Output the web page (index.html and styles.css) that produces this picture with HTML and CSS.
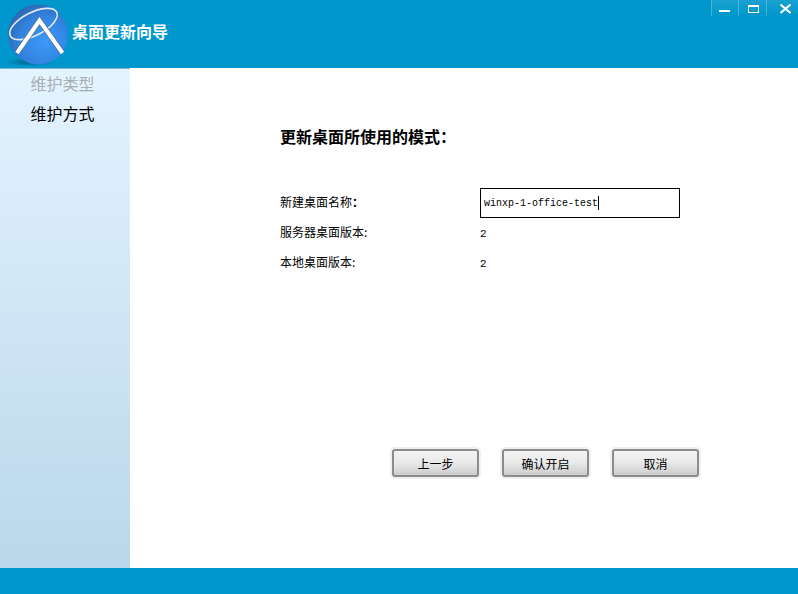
FILE: index.html
```html
<!DOCTYPE html>
<html lang="zh-CN">
<head>
<meta charset="utf-8">
<title>桌面更新向导</title>
<link rel="stylesheet" href="styles.css">
</head>
<body>
<div class="app">
  <header class="topbar">
    <svg class="logo" width="72" height="68" viewBox="0 0 72 68">
      <defs>
        <radialGradient id="ball" cx="0.62" cy="0.62" r="0.66">
          <stop offset="0" stop-color="#3c9af8"/>
          <stop offset="0.65" stop-color="#3282de"/>
          <stop offset="1" stop-color="#2c69b4"/>
        </radialGradient>
        <radialGradient id="shade" cx="0.5" cy="0.5" r="0.5">
          <stop offset="0" stop-color="#00506f" stop-opacity="0.75"/>
          <stop offset="1" stop-color="#00506f" stop-opacity="0"/>
        </radialGradient>
      </defs>
      <ellipse cx="30" cy="62" rx="24" ry="4.5" fill="url(#shade)"/>
      <circle cx="38" cy="34.5" r="30" fill="url(#ball)"/>
      <ellipse cx="33.5" cy="24" rx="26" ry="11.5" transform="rotate(-27 33.5 24)" fill="none" stroke="#dfe8f0" stroke-width="1.6"/>
      <path d="M17 53 L39.5 20.5 L62.5 53" fill="none" stroke="#5b6f84" stroke-width="5.4"/>
      <path d="M17 53 L39.5 20.5 L62.5 53" fill="none" stroke="#fff" stroke-width="4"/>
    </svg>
    <h1 class="app-title">桌面更新向导</h1>
    <div class="win-controls">
      <button class="win-btn" aria-label="最小化"><svg width="26" height="16" viewBox="0 0 26 16"><rect x="7" y="10" width="11" height="2" fill="#fff"/></svg></button>
      <button class="win-btn" aria-label="最大化"><svg width="27" height="16" viewBox="0 0 27 16"><rect x="9.5" y="5.5" width="10" height="7" fill="none" stroke="#fff" stroke-width="1"/><rect x="9" y="5" width="11" height="2" fill="#fff"/></svg></button>
      <button class="win-btn" aria-label="关闭"><svg width="31" height="16" viewBox="0 0 31 16"><path d="M13.5 4.5 L23.5 13 M23.5 4.5 L13.5 13" stroke="#fff" stroke-width="2.2" fill="none"/></svg></button>
    </div>
  </header>
  <div class="middle">
    <nav class="sidebar">
      <div class="step step-done">维护类型</div>
      <div class="step">维护方式</div>
    </nav>
    <main class="content">
      <h2 class="heading">更新桌面所使用的模式：</h2>
      <div class="form">
        <div class="label">新建桌面名称<b class="colon">：</b></div>
        <div class="field"><span class="field-text">winxp-1-office-test</span><span class="caret"></span></div>
        <div class="label">服务器桌面版本:</div>
        <div class="value">2</div>
        <div class="label">本地桌面版本:</div>
        <div class="value">2</div>
      </div>
      <div class="actions">
        <button class="btn">上一步</button>
        <button class="btn">确认开启</button>
        <button class="btn">取消</button>
      </div>
    </main>
  </div>
  <footer class="bottombar"></footer>
</div>
</body>
</html>
```

FILE: styles.css
```css
* { box-sizing: border-box; }
html, body { margin: 0; padding: 0; background: #fff; }
body { font-family: "Noto Sans CJK SC", "Liberation Sans", sans-serif; color: #000; }
.app { width: 798px; height: 594px; display: flex; flex-direction: column; overflow: hidden; }

.topbar { height: 68px; background: #0097cc; display: flex; align-items: flex-start; flex: none; }
.logo { flex: none; display: block; }
.app-title { margin: 23px 0 0; line-height: 16px; font-size: 16px; font-weight: 700; color: #fff; }
.win-controls { margin-left: auto; display: flex; }
.win-btn { height: 16px; padding: 0; border: 0; background: linear-gradient(to bottom, rgba(255,255,255,0.1), rgba(255,255,255,0)); border-left: 1px solid rgba(255,255,255,0.24); display: block; }
.win-btn svg { display: block; }

.middle { flex: 1; display: flex; min-height: 0; }
.sidebar { width: 130px; flex: none; background: linear-gradient(to bottom, #e4f4ff 0%, #bad7eb 100%); border-top: 1px solid #7fb6d6; display: flex; flex-direction: column; align-items: center; }
.step { width: 130px; padding-right: 5px; text-align: center; font-size: 16px; line-height: 28px; height: 30px; }
.step-done { color: #aaaeb2; }

.content { flex: 1; padding: 56px 0 0 150px; }
.heading { margin: 0; font-size: 16px; line-height: 24px; font-weight: 700; }
.form { margin-top: 40px; display: grid; grid-template-columns: 200px 200px; grid-auto-rows: 30px; align-items: center; }
.label { font-size: 12px; line-height: 16px; padding-bottom: 2px; }
.colon { font-weight: 700; }
.value { font-family: "Liberation Mono", monospace; font-size: 11px; line-height: 14px; padding-top: 2px; }
.field { height: 30px; border: 1px solid #000; background: #fff; display: flex; align-items: center; padding-left: 3px; }
.field-text { font-family: "Liberation Mono", monospace; font-size: 10px; }
.caret { width: 1px; height: 14px; background: #000; }

.actions { margin-top: 171px; margin-left: 112px; display: flex; gap: 23px; }
.btn { width: 87px; height: 28px; padding: 0; font: 12px "Noto Sans CJK SC", sans-serif; color: #000; border: 2px solid #8c8c8c; border-radius: 3px; background: linear-gradient(to bottom, #f4f4f4 0%, #e8e8e8 50%, #cdcdcd 100%); box-shadow: 0 0 0 2px #f0f0f0; }

.bottombar { height: 26px; background: #0097cc; flex: none; }
```
